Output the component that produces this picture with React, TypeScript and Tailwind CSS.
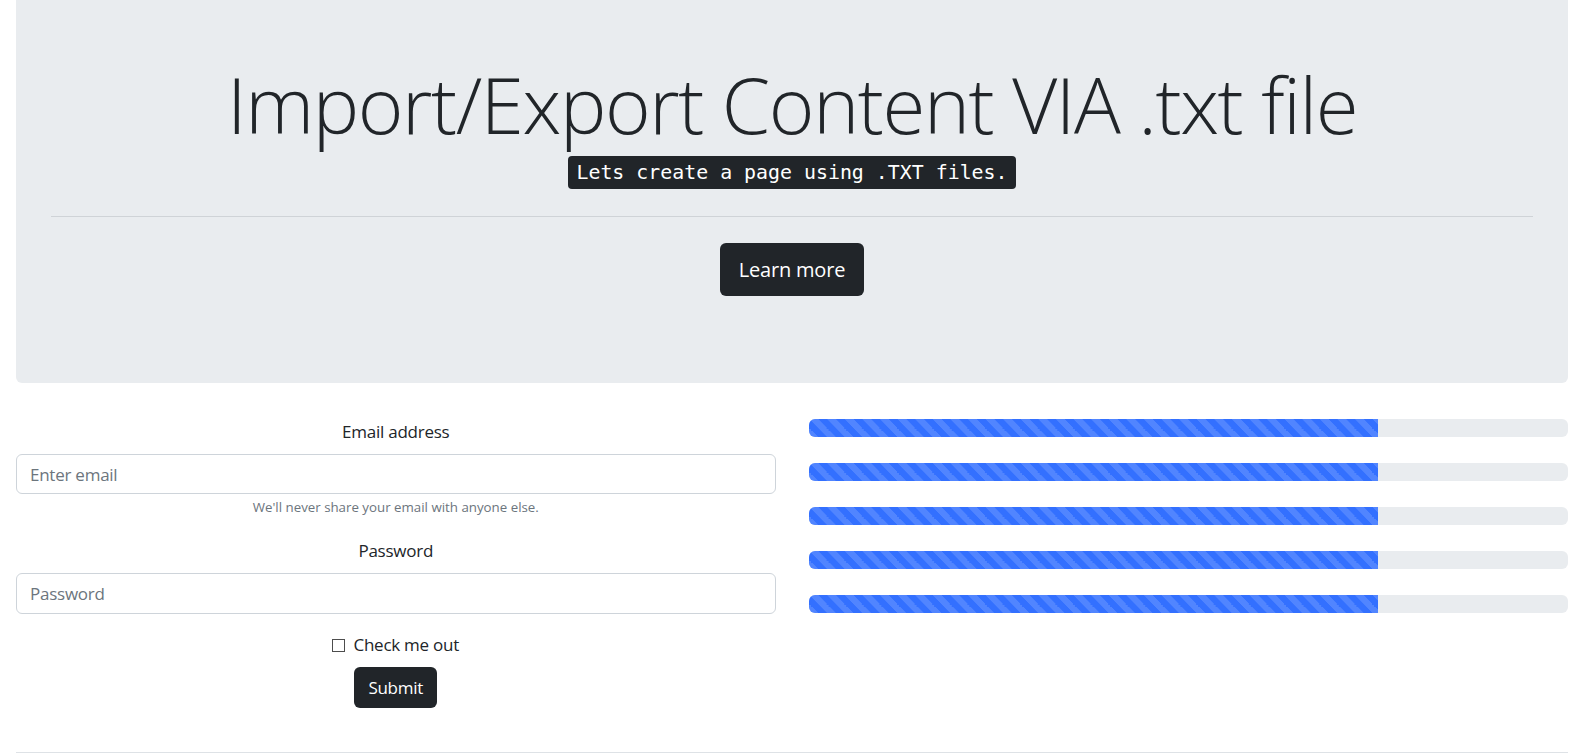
const bars = [0, 1, 2, 3, 4];

const stripes =
  "bg-[#3370ff] bg-[linear-gradient(45deg,rgba(255,255,255,.15)_25%,transparent_25%,transparent_50%,rgba(255,255,255,.15)_50%,rgba(255,255,255,.15)_75%,transparent_75%,transparent)] bg-[length:17.6px_17.6px]";

const App = () => {
  return (
    <div className="ml-4 mr-[14px] font-['Open_Sans',sans-serif] text-[#212529]">
      <section className="rounded-b-md bg-[#e9ecef] px-[35px] pt-[65px] pb-[87px] text-center">
        <h1 className="text-[78px] leading-[78px] font-light tracking-[-1.4px]">Import/Export Content VIA .txt file</h1>
        <div className="mt-[13px]">
          <kbd className="inline-block rounded bg-[#212529] px-2 py-[4px] font-['DejaVu_Sans_Mono',monospace] text-[19.9px] leading-[25px] text-white">
            Lets create a page using .TXT files.
          </kbd>
        </div>
        <hr className="mt-[27px] border-t border-[#cfd3d7]" />
        <button className="mt-[26px] h-[53px] rounded-md bg-[#212529] px-[19px] text-[20px] tracking-[-0.2px] text-white">
          Learn more
        </button>
      </section>

      <div className="grid grid-cols-2 gap-[33px] pt-9">
        <form className="flex flex-col text-center text-[17px] tracking-[-0.25px]">
          <label className="leading-[26px]">Email address</label>
          <input
            type="email"
            placeholder="Enter email"
            className="mt-[9px] h-10 rounded-md border border-[#ced4da] bg-white px-[13px] text-[17px] placeholder:text-[#6c757d] outline-none"
          />
          <small className="mt-[3px] text-[13.3px] leading-[21px] tracking-normal text-[#6c757d]">
            We'll never share your email with anyone else.
          </small>
          <label className="mt-5 leading-[26px]">Password</label>
          <input
            type="password"
            placeholder="Password"
            className="mt-[9px] h-[41px] rounded-md border border-[#ced4da] bg-white px-[13px] text-[17px] placeholder:text-[#6c757d] outline-none"
          />
          <div className="mt-[18px] flex items-center justify-center gap-2 leading-[26px]">
            <span className="h-[13px] w-[13px] border border-[#4d4d4d] bg-white" />
            <span>Check me out</span>
          </div>
          <div className="mt-[9px]">
            <button type="button" className="h-[41px] rounded-md bg-[#212529] px-[14px] text-white">
              Submit
            </button>
          </div>
        </form>

        <div className="flex flex-col gap-[26px]">
          {bars.map((b) => (
            <div key={b} className="h-[18px] overflow-hidden rounded-md bg-[#e9ecef]">
              <div className={`h-full w-3/4 ${stripes}`} />
            </div>
          ))}
        </div>
      </div>

      <hr className="mt-[44px] border-t border-[#dee2e6]" />
    </div>
  );
};

export default App;
